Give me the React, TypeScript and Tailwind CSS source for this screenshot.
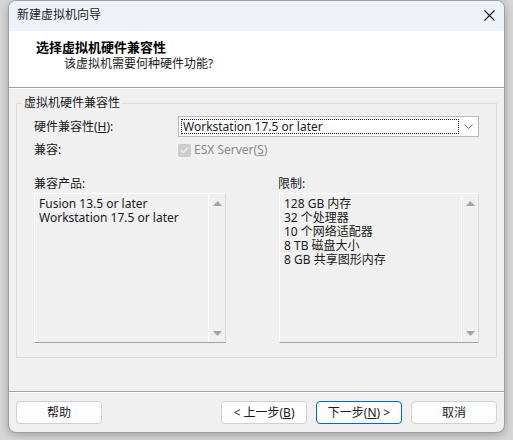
import React from "react";

const FONT = { fontFamily: '"Noto Sans", "Noto Sans CJK SC", sans-serif' };

function UpArrow() {
  return (
    <svg width="9" height="5" viewBox="0 0 9 5">
      <polygon points="0,5 9,5 4.5,0" fill="#a3a3a3" />
    </svg>
  );
}
function DownArrow() {
  return (
    <svg width="9" height="5" viewBox="0 0 9 5">
      <polygon points="0,0 9,0 4.5,5" fill="#a3a3a3" />
    </svg>
  );
}

function ListBox({ items, width }: { items: string[]; width: string }) {
  return (
    <div
      className={`${width} h-[150px] flex border-t border-l border-t-white border-l-white border-r border-r-[#dadada] border-b border-b-[#a0a0a0] bg-[#f0f0f0]`}
    >
      <div className="flex-1 pl-[4px] pt-[3px] flex flex-col text-[12px] text-[#1a1a1a]">
        {items.map((t) => (
          <div key={t} className="whitespace-nowrap h-[14px] leading-[14px] overflow-visible">
            {t}
          </div>
        ))}
      </div>
      <div className="w-[17px] border-l border-l-white flex flex-col items-center justify-between pt-[7px] pb-[6px]">
        <UpArrow />
        <DownArrow />
      </div>
    </div>
  );
}

function Btn({ children, primary }: { children: React.ReactNode; primary?: boolean }) {
  return (
    <div
      className={`w-[86px] h-[23px] rounded-[4px] flex items-center justify-center text-[12px] text-[#1a1a1a] bg-[#fdfdfd] border ${
        primary ? "border-[#0067c0]" : "border-[#d0d0d0]"
      }`}
    >
      {children}
    </div>
  );
}

export default function App() {
  return (
    <div className="w-[513px] h-[440px] bg-[#d6d6d6] overflow-hidden" style={FONT}>
      <div className="ml-[8px] w-[497px] h-[433px] rounded-[8px] border border-[#9e9e9e] bg-[#f0f0f0] flex flex-col overflow-hidden shadow-[0_2px_8px_rgba(0,0,0,0.25)]">
        {/* Title bar */}
        <div className="h-[30px] shrink-0 bg-[#eef2f8] flex items-center justify-between pl-[8px] pr-[9px] pb-[2px]">
          <span className="text-[12px] text-[#1a1a1a]">新建虚拟机向导</span>
          <svg width="11" height="11" viewBox="0 0 11 11" className="mt-[1px]">
            <path d="M0.5 0.5 L10.5 10.5 M10.5 0.5 L0.5 10.5" stroke="#1a1a1a" strokeWidth="1.1" />
          </svg>
        </div>
        {/* Header */}
        <div className="h-[56px] shrink-0 bg-white pl-[27px] pt-[8px]">
          <div className="text-[13px] leading-[16px] font-bold text-black">选择虚拟机硬件兼容性</div>
          <div className="text-[12px] leading-[17px] text-[#1a1a1a] pl-[28px]">该虚拟机需要何种硬件功能?</div>
        </div>
        <div className="h-px bg-[#a0a0a0] shrink-0" />
        <div className="h-px bg-white shrink-0" />
        {/* Body */}
        <div className="flex-1 px-[7px] pt-[6px]">
          <fieldset className="border border-[#dcdcdc] pb-[14px]">
            <legend className="ml-[6px] px-[1px] text-[12px] leading-[16px] text-[#1a1a1a]">虚拟机硬件兼容性</legend>
            <div className="px-[17px] pt-[5px] flex flex-col text-[12px] text-[#1a1a1a]">
              <div className="flex items-center h-[21px]">
                <span className="w-[144px]">
                  硬件兼容性(<span className="underline">H</span>):
                </span>
                <div className="flex-1 h-[21px] bg-white border border-[#b8b8b8] flex items-center pl-[2px]">
                  <div className="flex-1 h-[15px] border border-dotted border-[#202020] flex items-center pl-[1px] leading-[13px]">
                    Workstation 17.5 or later
                  </div>
                  <div className="w-[19px] flex items-center justify-center">
                    <svg width="9" height="5" viewBox="0 0 9 5">
                      <path d="M0.5 0.5 L4.5 4.5 L8.5 0.5" stroke="#606060" strokeWidth="1" fill="none" />
                    </svg>
                  </div>
                </div>
              </div>
              <div className="flex items-center h-[14px] mt-[6px]">
                <span className="w-[144px]">兼容:</span>
                <div className="w-[13px] h-[13px] rounded-[2px] bg-[#cccccc] flex items-center justify-center">
                  <svg width="9" height="8" viewBox="0 0 9 8">
                    <path d="M1 4 L3.5 6.5 L8 1.5" stroke="#efefef" strokeWidth="1.5" fill="none" />
                  </svg>
                </div>
                <span className="ml-[3px] text-[#8a8a8a]">
                  ESX Server(<span className="underline">S</span>)
                </span>
              </div>
              <div className="flex mt-[19px] h-[16px] leading-[16px]">
                <span className="w-[244px]">兼容产品:</span>
                <span>限制:</span>
              </div>
              <div className="flex mt-[1px] gap-[53px]">
                <ListBox width="w-[192px]" items={["Fusion 13.5 or later", "Workstation 17.5 or later"]} />
                <ListBox
                  width="w-[200px]"
                  items={["128 GB 内存", "32 个处理器", "10 个网络适配器", "8 TB 磁盘大小", "8 GB 共享图形内存"]}
                />
              </div>
            </div>
          </fieldset>
        </div>
        <div className="h-px bg-[#a0a0a0] shrink-0" />
        <div className="h-px bg-white shrink-0" />
        {/* Buttons */}
        <div className="h-[39px] shrink-0 flex items-start px-[7px] pt-[8px]">
          <Btn>帮助</Btn>
          <div className="flex-1" />
          <div className="flex gap-[9px]">
            <Btn>
              &lt; 上一步(<span className="underline">B</span>)
            </Btn>
            <Btn primary>
              下一步(<span className="underline">N</span>) &gt;
            </Btn>
            <Btn>取消</Btn>
          </div>
        </div>
      </div>
    </div>
  );
}
